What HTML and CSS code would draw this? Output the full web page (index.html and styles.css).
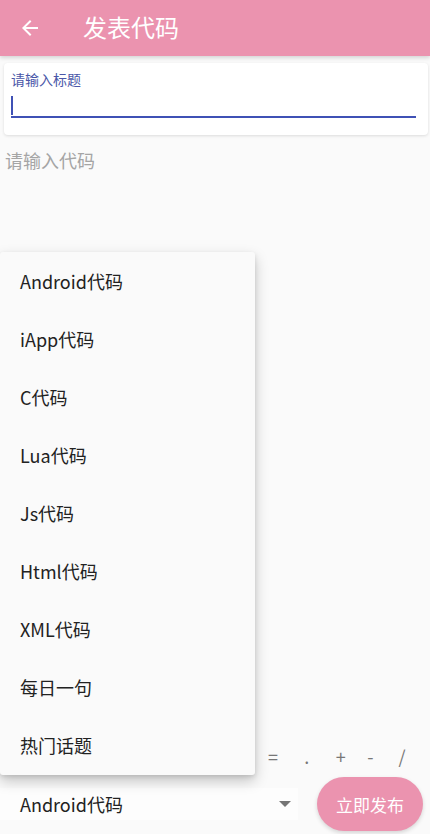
FILE: index.html
```html
<!DOCTYPE html>
<html lang="zh">
<head>
<meta charset="utf-8">
<link rel="stylesheet" href="styles.css">
</head>
<body>
<div class="app">
  <header class="appbar">
    <svg class="back" width="24" height="24" viewBox="0 0 24 24"><path d="M20 11H7.83l5.59-5.59L12 4l-8 8 8 8 1.41-1.41L7.83 13H20v-2z" fill="#fff"/></svg>
    <span class="title">发表代码</span>
  </header>
  <div class="card">
    <div class="label">请输入标题</div>
    <div class="input"><span class="cursor"></span></div>
  </div>
  <div class="code">请输入代码</div>
  <div class="symbols">
    <span>=</span><span>.</span><span>+</span><span>-</span><span>/</span>
  </div>
  <div class="bottom">
    <div class="spinner">
      <span>Android代码</span>
      <span class="tri"></span>
    </div>
    <button class="publish">立即发布</button>
  </div>
  <ul class="menu">
    <li>Android代码</li>
    <li>iApp代码</li>
    <li>C代码</li>
    <li>Lua代码</li>
    <li>Js代码</li>
    <li>Html代码</li>
    <li>XML代码</li>
    <li>每日一句</li>
    <li>热门话题</li>
  </ul>
</div>
</body>
</html>
```
FILE: styles.css
```css
* { box-sizing: border-box; }
html, body { margin: 0; padding: 0; }
body {
  background: #fafafa;
  font-family: "Noto Sans CJK SC", "Noto Sans", sans-serif;
  width: 430px;
  height: 834px;
  overflow: hidden;
}
.app {
  position: relative;
  height: 834px;
  display: flex;
  flex-direction: column;
}
.appbar {
  height: 56px;
  background: #eb93af;
  display: flex;
  align-items: center;
  padding-left: 18px;
  box-shadow: 0 2px 4px rgba(0,0,0,0.15);
  flex-shrink: 0;
}
.back { display: block; }
.title {
  color: #fff;
  font-size: 24px;
  margin-left: 41px;
  line-height: 1;
  margin-top: -2px;
}
.card {
  margin: 7px 2px 0 4px;
  height: 72px;
  background: #fff;
  border-radius: 4px;
  box-shadow: 0 1px 3px rgba(0,0,0,0.12);
  padding: 7px 12px 0 7px;
}
.label {
  font-size: 14px;
  color: #4a57a8;
  line-height: 18px;
}
.input {
  margin-top: 6px;
  height: 24px;
  border-bottom: 2px solid #3f51b5;
  display: flex;
  align-items: flex-start;
}
.cursor {
  width: 2px;
  height: 19px;
  margin-top: 2px;
  background: #3f51b5;
}
.code {
  flex: 1;
  padding: 13px 5px;
  font-size: 18px;
  color: #a5a5a5;
  line-height: 24px;
}
.symbols {
  height: 44px;
  display: flex;
  align-items: center;
  padding-left: 268px;
  color: #777;
  font-size: 18px;
}
.symbols span { width: 33px; }
.symbols span:nth-child(1) { width: 38px; }
.bottom {
  height: 52px;
  display: flex;
  align-items: center;
  justify-content: space-between;
  padding: 0 7px 0 0;
  margin-bottom: 4px;
}
.spinner {
  width: 298px;
  height: 32px;
  padding-left: 20px;
  display: flex;
  align-items: center;
  justify-content: space-between;
  font-size: 18px;
  color: #222;
  background: #fdfdfd;
}
.tri {
  width: 0; height: 0;
  border-left: 6px solid transparent;
  border-right: 6px solid transparent;
  border-top: 6px solid #757575;
  margin-right: 7px;
}
.publish {
  width: 106px;
  height: 54px;
  border: none;
  border-radius: 27px;
  background: #eb93af;
  color: #fff;
  font-family: inherit;
  font-size: 17px;
  box-shadow: 0 2px 4px rgba(0,0,0,0.15);
}
.menu {
  position: absolute;
  left: 0;
  top: 252px;
  width: 255px;
  margin: 0;
  padding: 0;
  list-style: none;
  background: #fafafa;
  border-radius: 3px;
  box-shadow: 0 6px 14px rgba(0,0,0,0.22), 0 2px 4px rgba(0,0,0,0.1);
}
.menu li {
  height: 58px;
  display: flex;
  align-items: center;
  padding-left: 20px;
  padding-bottom: 3px;
  font-size: 18px;
  color: #222;
}
.menu li:first-child { margin-top: 1px; }
```
